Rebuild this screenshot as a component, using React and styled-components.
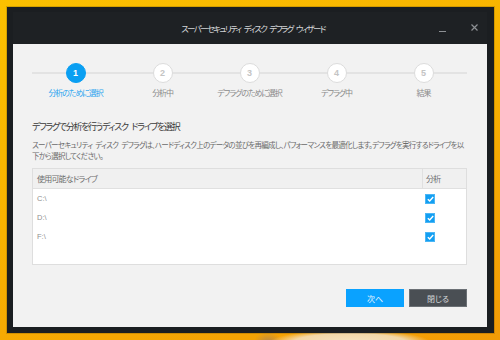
import React from 'react'
import styled, { createGlobalStyle } from 'styled-components'

const GlobalStyle = createGlobalStyle`
    html, body {
        margin: 0;
        padding: 0;
    }
    body {
        width: 500px;
        height: 340px;
        overflow: hidden;
        font-family: "Noto Sans CJK JP", "Noto Sans", sans-serif;
        font-feature-settings: "palt";
        background:
            radial-gradient(ellipse 80px 12px at 350px 342px, #f6e2c0 0%, #f3d7a8 70%, rgba(243,180,80,0) 100%),
            radial-gradient(ellipse 14px 10px at 268px 342px, #b98a4a 0%, rgba(200,140,60,0) 100%),
            linear-gradient(160deg, #fbc000 0%, #f8b200 45%, #f29b06 100%);
    }
`

const steps = ['分析のために選択', '分析中', 'デフラグのために選択', 'デフラグ中', '結果']
const drives = ['C:\\', 'D:\\', 'F:\\']

function Check() {
    return (
        <svg width="7" height="6" viewBox="0 0 7 6">
            <path d="M0.8 3.2 L2.7 5 L6.2 1" fill="none" stroke="#fff" strokeWidth="1.4" />
        </svg>
    )
}

export default function App() {
    return (
        <Page>
            <GlobalStyle />
            <Window>
                <TitleBar>
                    <span />
                    <Title>スーパーセキュリティ ディスク デフラグ ウィザード</Title>
                    <Controls>
                        <Minimize />
                        <Close>
                            <svg width="7" height="7" viewBox="0 0 7 7">
                                <path d="M0.5 0.5 L6.5 6.5 M6.5 0.5 L0.5 6.5" stroke="#8d9094" strokeWidth="1.2" />
                            </svg>
                        </Close>
                    </Controls>
                </TitleBar>

                <Content>
                    <Stepper>
                        {steps.map((label, i) => (
                            <Step key={label}>
                                <Circle active={i === 0}>{i + 1}</Circle>
                                <StepLabel active={i === 0}>{label}</StepLabel>
                            </Step>
                        ))}
                    </Stepper>

                    <Heading>デフラグで分析を行うディスク ドライブを選択</Heading>
                    <Description>
                        スーパーセキュリティ ディスク デフラグは、ハードディスク上のデータの並びを再編成し、パフォーマンスを最適化します。デフラグを実行するドライブを以
                        <br />
                        下から選択してください。
                    </Description>

                    <Table>
                        <HeaderRow>
                            <HeaderCell>使用可能なドライブ</HeaderCell>
                            <HeaderCell narrow>分析</HeaderCell>
                        </HeaderRow>
                        <Body>
                            {drives.map(d => (
                                <Row key={d}>
                                    <DriveName>{d}</DriveName>
                                    <CheckCell>
                                        <CheckBox><Check /></CheckBox>
                                    </CheckCell>
                                </Row>
                            ))}
                        </Body>
                    </Table>

                    <Buttons>
                        <Button primary>次へ</Button>
                        <Button>閉じる</Button>
                    </Buttons>
                </Content>
            </Window>
        </Page>
    )
}

const Page = styled.div`
    padding: 7px 6px 7px 7px;
`

const Window = styled.div`
    width: 487px;
    height: 326px;
    box-sizing: border-box;
    background: #1b1e21;
    padding: 0 7px 6px 6px;
    display: flex;
    flex-direction: column;
    box-shadow: 0 0 0 1px rgba(0,0,0,0.15);
`

const TitleBar = styled.div`
    display: grid;
    grid-template-columns: 1fr auto 1fr;
    align-items: center;
    background: #1e2124;
    margin-top: 5px;
    height: 32px;
`

const Title = styled.div`
    color: #d2d4d6;
    font-size: 8.5px;
    letter-spacing: -1.7px;
    word-spacing: 3px;
    padding-left: 6px;
`

const Controls = styled.div`
    display: flex;
    justify-content: flex-end;
    align-items: center;
    padding-right: 9px;
    gap: 25px;
`

const Minimize = styled.div`
    width: 7px;
    height: 1.5px;
    background: #8d9094;
    margin-top: 7px;
`

const Close = styled.div`
    display: flex;
    margin-top: -2px;
`

const Content = styled.div`
    flex: 1;
    background: #f2f2f2;
    padding: 19px 20px 20px 19px;
    display: flex;
    flex-direction: column;
`

const Stepper = styled.div`
    display: flex;
    position: relative;
    &::before {
        content: '';
        position: absolute;
        left: 0;
        right: 0;
        top: 9px;
        height: 2px;
        background: #e3e3e3;
    }
`

const Step = styled.div`
    flex: 1;
    display: flex;
    flex-direction: column;
    align-items: center;
    position: relative;
`

const Circle = styled.div`
    width: 20px;
    height: 20px;
    box-sizing: border-box;
    border-radius: 50%;
    background: ${p => (p.active ? '#0a9ff2' : '#ffffff')};
    border: 1px solid ${p => (p.active ? '#0a9ff2' : '#dcdcdc')};
    color: ${p => (p.active ? '#ffffff' : '#c4c4c4')};
    font-family: "Liberation Sans", sans-serif;
    font-weight: bold;
    font-size: 9px;
    display: flex;
    align-items: center;
    justify-content: center;
`

const StepLabel = styled.div`
    margin-top: 4px;
    font-size: 8px;
    letter-spacing: -1.1px;
    line-height: 12px;
    color: ${p => (p.active ? '#2ba5f0' : '#8a8a8a')};
    white-space: nowrap;
`

const Heading = styled.div`
    margin-top: 21px;
    font-size: 9px;
    letter-spacing: -1.3px;
    word-spacing: 3px;
    line-height: 14px;
    color: #3a3a3a;
`

const Description = styled.div`
    margin-top: 5px;
    font-size: 7.5px;
    letter-spacing: -0.7px;
    word-spacing: 2px;
    line-height: 11px;
    color: #6a6a6a;
    white-space: nowrap;
`

const Table = styled.div`
    margin-top: 7px;
    border: 1px solid #dedede;
    height: 97px;
    box-sizing: border-box;
    display: flex;
    flex-direction: column;
`

const HeaderRow = styled.div`
    display: flex;
    height: 19px;
    background: #f0f0f0;
    border-bottom: 1px solid #e0e0e0;
`

const HeaderCell = styled.div`
    flex: ${p => (p.narrow ? '0 0 40px' : '1')};
    display: flex;
    align-items: center;
    padding-left: ${p => (p.narrow ? '3px' : '4px')};
    font-size: 8px;
    letter-spacing: -0.8px;
    color: #6e6e6e;
    border-left: ${p => (p.narrow ? '1px solid #e0e0e0' : 'none')};
`

const Body = styled.div`
    flex: 1;
    background: #ffffff;
`

const Row = styled.div`
    display: flex;
    height: 19px;
    align-items: center;
`

const DriveName = styled.div`
    flex: 1;
    padding-left: 4px;
    font-family: "Liberation Sans", sans-serif;
    font-size: 7.5px;
    color: #8f8f8f;
`

const CheckCell = styled.div`
    flex: 0 0 41px;
    padding-left: 4px;
    display: flex;
    align-items: center;
`

const CheckBox = styled.div`
    width: 10px;
    height: 10px;
    background: #139ff2;
    border: 1px solid #4bb6f5;
    box-sizing: border-box;
    display: flex;
    align-items: center;
    justify-content: center;
`

const Buttons = styled.div`
    margin-top: auto;
    display: flex;
    justify-content: flex-end;
    gap: 5px;
`

const Button = styled.div`
    width: 58px;
    height: 18px;
    box-sizing: border-box;
    display: flex;
    align-items: center;
    justify-content: center;
    font-size: 8px;
    color: ${p => (p.primary ? '#e8f6ff' : '#d5d7d9')};
    background: ${p => (p.primary ? '#0aa2ff' : '#4a4f54')};
    border: 1px solid ${p => (p.primary ? '#0aa2ff' : '#6b7075')};
`
